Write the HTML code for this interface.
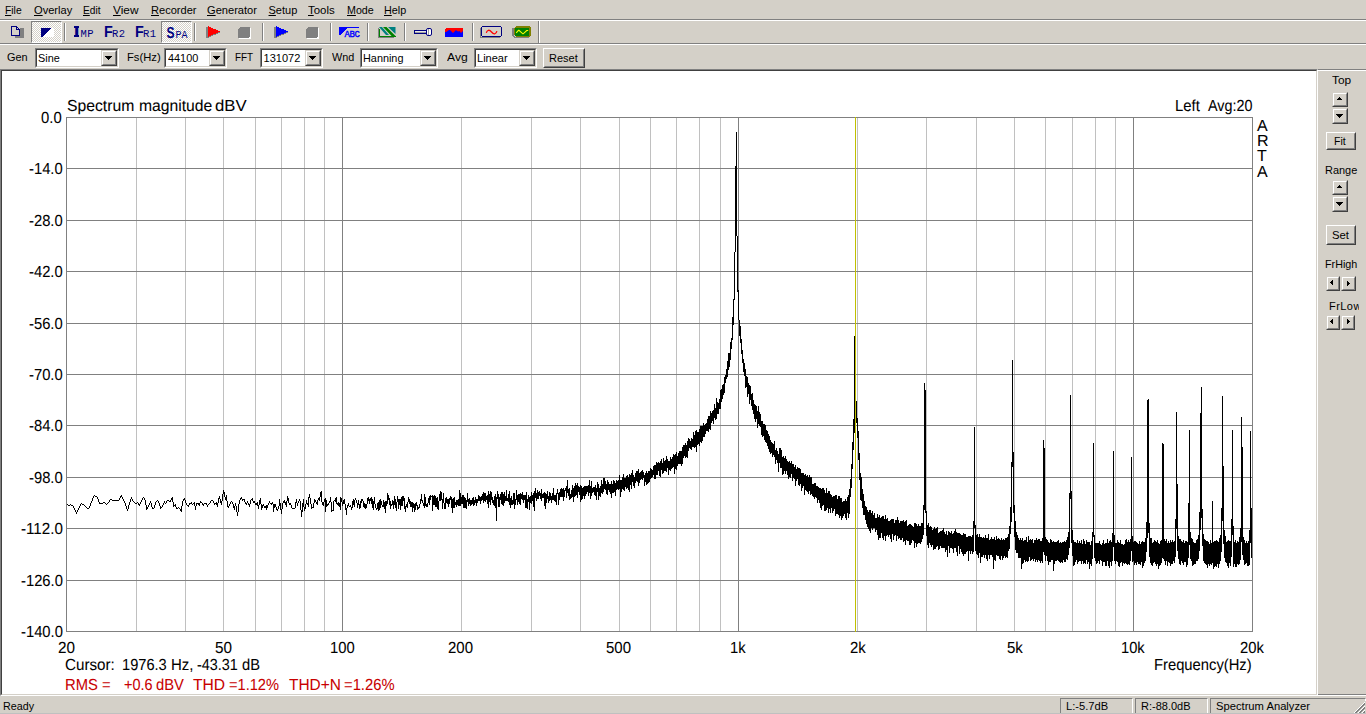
<!DOCTYPE html><html lang="en"><head><meta charset="utf-8"><title>ARTA - Spectrum Analyzer</title><style>
html,body{margin:0;padding:0}
body{width:1366px;height:714px;overflow:hidden;background:#d4d0c8;position:relative;font-family:"Liberation Sans", sans-serif;font-size:11px;color:#000;-webkit-font-smoothing:antialiased}
.abs,.t,.hl,.vl,.btn,.combo,.spin,.pane,.tb{position:absolute}
.t{white-space:pre;line-height:normal;transform-origin:0 0}
.p{text-rendering:geometricPrecision;-webkit-text-stroke:0.06px}
.hl{height:1px;left:0;width:1366px}
.vl{width:1px}
.btn{box-sizing:border-box;border:1px solid;border-color:#ffffff #404040 #404040 #ffffff;background:#d4d0c8}
.btn i{position:absolute;left:0;top:0;right:0;bottom:0;border:1px solid;border-color:#d4d0c8 #808080 #808080 #d4d0c8}
.sbtn{position:absolute;box-sizing:border-box;border:1px solid;border-color:#d4d0c8 #404040 #404040 #d4d0c8;background:#d4d0c8}
.sbtn i{position:absolute;left:0;top:0;right:0;bottom:0;border:1px solid;border-color:#ffffff #808080 #808080 #ffffff}
.combo{box-sizing:border-box;height:20px;top:48px;border:1px solid;border-color:#808080 #ffffff #ffffff #808080;background:#fff}
.combo>i{position:absolute;left:0;top:0;right:0;bottom:0;border:1px solid;border-color:#404040 #d4d0c8 #d4d0c8 #404040}
.combo .dd{right:1px;top:1px;width:16px;height:16px}
.pressed{position:absolute;box-sizing:border-box;width:31px;height:22px;top:21px;border:1px solid;border-color:#808080 #ffffff #ffffff #808080;
 background-image:conic-gradient(#ffffff 25%,#d4d0c8 0 50%,#ffffff 0 75%,#d4d0c8 0);background-size:2px 2px}
.sep{position:absolute;top:23px;width:2px;height:18px;border-left:1px solid #808080;border-right:1px solid #ffffff;box-sizing:border-box}
.pane{box-sizing:border-box;top:698px;height:16px;border:1px solid;border-color:#808080 #ffffff #ffffff #808080}
svg{position:absolute;left:0;top:0;overflow:visible}
u{text-decoration:underline;text-underline-offset:1px;text-decoration-thickness:1px}
</style></head><body>
<div class="abs" id="menubar" style="left:0;top:0;width:1366px;height:19px">
<div id="t1" class="t " style="left:5.37px;top:4px;font-size:11px;transform:scaleX(0.9375);"><u>F</u>ile</div>
<div id="t2" class="t " style="left:34.22px;top:4px;font-size:11px;transform:scaleX(1.009);"><u>O</u>verlay</div>
<div id="t3" class="t " style="left:82.89px;top:4px;font-size:11px;transform:scaleX(0.9225);"><u>E</u>dit</div>
<div id="t4" class="t " style="left:112.94px;top:4px;font-size:11px;transform:scaleX(1.0771);"><u>V</u>iew</div>
<div id="t5" class="t " style="left:150.81px;top:4px;font-size:11px;transform:scaleX(1.0059);"><u>R</u>ecorder</div>
<div id="t6" class="t " style="left:207.1px;top:4px;font-size:11px;transform:scaleX(1.0091);"><u>G</u>enerator</div>
<div id="t7" class="t " style="left:268.53px;top:4px;font-size:11px;"><u>S</u>etup</div>
<div id="t8" class="t " style="left:308.14px;top:4px;font-size:11px;transform:scaleX(1.0381);"><u>T</u>ools</div>
<div id="t9" class="t " style="left:346.5px;top:4px;font-size:11px;transform:scaleX(0.9692);"><u>M</u>ode</div>
<div id="t10" class="t " style="left:383.64px;top:4px;font-size:11px;transform:scaleX(0.9805);"><u>H</u>elp</div>
</div>
<div class="hl" style="top:19px;background:#808080"></div><div class="hl" style="top:20px;background:#ffffff"></div>
<div class="abs" id="toolbar" style="left:0;top:21px;width:540px;height:22px"></div>
<div class="pressed" style="left:31px"></div><div class="pressed" style="left:161px"></div>
<div class="sep" style="left:64px"></div>
<div class="sep" style="left:194px"></div>
<div class="sep" style="left:262px"></div>
<div class="sep" style="left:330px"></div>
<div class="sep" style="left:367px"></div>
<div class="sep" style="left:404px"></div>
<div class="sep" style="left:472px"></div>
<div class="vl" style="left:538px;top:21px;height:22px;background:#808080"></div><div class="vl" style="left:539px;top:21px;height:22px;background:#ffffff"></div>
<div class="hl" style="top:43px;background:#808080"></div><div class="hl" style="top:44px;background:#ffffff"></div>
<svg width="540" height="46" viewBox="0 0 540 46" shape-rendering="crispEdges"><rect x="15" y="28" width="9" height="10" fill="#808080"/><path d="M11 26h6l3 3v7h-9z" fill="#d4d0c8"/><path d="M11.5 26.5h5l3 3v6h-8z M16.5 26.5v3h3" fill="none" stroke="#000080"/><path d="M41 28h13v9h-13z" fill="#fff"/><path d="M41 28h10l-9 9h-1z" fill="#000080"/><text transform="translate(73.7 37) scale(1.3 1)" font-family='"Liberation Sans", sans-serif' font-weight="bold" font-size="16" fill="#000080" shape-rendering="auto" text-rendering="geometricPrecision">I</text><path d="M74 26h5v2h-5zM74 35h5v2h-5z" fill="#000080"/><text x="80.5" y="37" font-family='"Liberation Mono", monospace' font-weight="normal" font-size="10.5" letter-spacing="0.5" fill="#000080"  shape-rendering="auto">MP</text><text transform="translate(104.1 37) scale(0.9 1)" font-family='"Liberation Sans", sans-serif' font-weight="bold" font-size="16" fill="#000080" shape-rendering="auto" text-rendering="geometricPrecision">F</text><text x="111.9" y="37" font-family='"Liberation Mono", monospace' font-weight="normal" font-size="10.5" letter-spacing="0.5" fill="#000080"  shape-rendering="auto">R2</text><text transform="translate(135.1 37) scale(0.9 1)" font-family='"Liberation Sans", sans-serif' font-weight="bold" font-size="16" fill="#000080" shape-rendering="auto" text-rendering="geometricPrecision">F</text><text x="142.9" y="37" font-family='"Liberation Mono", monospace' font-weight="normal" font-size="10.5" letter-spacing="0.5" fill="#000080"  shape-rendering="auto">R1</text><text transform="translate(166.5 38) scale(0.76 1)" font-family='"Liberation Sans", sans-serif' font-weight="bold" font-size="15.8" fill="#000080" shape-rendering="auto" text-rendering="geometricPrecision">S</text><text x="175.6" y="38" font-family='"Liberation Mono", monospace' font-weight="normal" font-size="10" letter-spacing="0.0" fill="#000080"  shape-rendering="auto">PA</text><path d="M206 27h2v11h-2z M208 27l12 5.500l-12 5.500z" fill="#808080"/><path d="M208 26l12 5.500l-12 5.500z" fill="#ff0000"/><path d="M274 27h2v11h-2z M276 27l12 5.500l-12 5.500z" fill="#808080"/><path d="M276 26l12 5.500l-12 5.500z" fill="#0000ff"/><path d="M239 28h12v10l-1 1h-11z" fill="#fff"/><path d="M240 27h10v10l-2 1h-10v-9z" fill="#808080"/><path d="M307 28h12v10l-1 1h-11z" fill="#fff"/><path d="M308 27h10v10l-2 1h-10v-9z" fill="#808080"/><path d="M339 27h20v1h-12l-7 7h-1z" fill="#0000ff"/><text x="344.5" y="37" font-family='"Liberation Mono", monospace' font-weight="normal" font-size="9.0" letter-spacing="-0.45" fill="#0000ff" stroke="#0000ff" stroke-width="0.35" shape-rendering="auto">ABC</text><path d="M378 28h1v9h15v1h-16z" fill="#808080"/><path d="M379 27h3l7 8h-3z M388 27h7.500v7z" fill="#008080" shape-rendering="auto"/><path d="M379 29h1v7h15.500v1h-16.500z" fill="#008000"/><path d="M383 27h3.500l9.500 9.500v0.500h-3.500z" fill="#008000" shape-rendering="auto"/><rect x="414.5" y="30.5" width="12" height="3" fill="#e8e8e8" stroke="#000080"/><path d="M415 32h11" stroke="#a0a0a0"/><rect x="426.5" y="28.5" width="5" height="7" rx="1.5" fill="#fff" stroke="#000080" shape-rendering="auto"/><path d="M428.5 29v6" stroke="#a0a0a0"/><path d="M427 28h1M431 28h1M427 36h1" stroke="#d4d0c8" stroke-width="0"/><path d="M446 28h16l1 1v8h-18v-8z" fill="#ff0000"/><path d="M445 37v-5l1 0l3-2l1 0l3 3l3-3l1 1l1.500 0.500l1-0.500l1.500 2l2-2v6z" fill="#0000ff" shape-rendering="auto"/><path d="M480 28h1v9h19v1h-20z" fill="#808080"/><path d="M482 26.500h19M482 36.500h19M481.500 27v9M501.500 27v9" fill="none" stroke="#000080"/><path d="M486.300 32.800c0.800-3 3-3.400 5.200-0.800s4.600 2.400 5.400-0.800" fill="none" stroke="#ff0000" stroke-width="1.300" shape-rendering="auto"/><path d="M512 28h2v8l2 1h13v1h-15l-2-2z" fill="#808080"/><path d="M516 26h13l2 2v7l-2 2h-13l-2-2v-7z" fill="#808000"/><rect x="515" y="28" width="14" height="8" fill="#008000"/><path d="M516.200 32.800l2.300-2.500l0.500 0l3.800 3.500l0.400 0l3.500-3.300l1.500 0" fill="none" stroke="#ffff00" stroke-width="1.100" shape-rendering="auto"/></svg>
<div id="t11" class="t " style="left:7.49px;top:51px;font-size:11px;transform:scaleX(0.9935);">Gen</div>
<div class="combo" style="left:35px;width:84px"><i></i><div class="sbtn dd"><i></i><svg width="7" height="4" style="left:3px;top:5px" shape-rendering="crispEdges"><path d="M0 0h7v1h-1v1h-1v1h-1v1h-1v-1h-1v-1h-1v-1h-1z" fill="#000"/></svg></div></div>
<div id="t12" class="t " style="left:38.19px;top:52px;font-size:11px;transform:scaleX(0.9883);">Sine</div>
<div id="t13" class="t " style="left:127.11px;top:51px;font-size:11px;transform:scaleX(1.019);">Fs(Hz)</div>
<div class="combo" style="left:164px;width:63px"><i></i><div class="sbtn dd"><i></i><svg width="7" height="4" style="left:3px;top:5px" shape-rendering="crispEdges"><path d="M0 0h7v1h-1v1h-1v1h-1v1h-1v-1h-1v-1h-1v-1h-1z" fill="#000"/></svg></div></div>
<div id="t14" class="t " style="left:168.26px;top:52px;font-size:11px;transform:scaleX(0.9902);">44100</div>
<div id="t15" class="t " style="left:235.22px;top:51px;font-size:11px;transform:scaleX(0.8964);">FFT</div>
<div class="combo" style="left:260px;width:63px"><i></i><div class="sbtn dd"><i></i><svg width="7" height="4" style="left:3px;top:5px" shape-rendering="crispEdges"><path d="M0 0h7v1h-1v1h-1v1h-1v1h-1v-1h-1v-1h-1v-1h-1z" fill="#000"/></svg></div></div>
<div id="t16" class="t " style="left:263.6px;top:52px;font-size:11px;">131072</div>
<div id="t17" class="t " style="left:331.76px;top:51px;font-size:11px;transform:scaleX(0.9861);">Wnd</div>
<div class="combo" style="left:360px;width:78px"><i></i><div class="sbtn dd"><i></i><svg width="7" height="4" style="left:3px;top:5px" shape-rendering="crispEdges"><path d="M0 0h7v1h-1v1h-1v1h-1v1h-1v-1h-1v-1h-1v-1h-1z" fill="#000"/></svg></div></div>
<div id="t18" class="t " style="left:362.56px;top:52px;font-size:11px;transform:scaleX(0.9872);">Hanning</div>
<div id="t19" class="t " style="left:446.53px;top:51px;font-size:11px;transform:scaleX(1.1046);">Avg</div>
<div class="combo" style="left:474px;width:63px"><i></i><div class="sbtn dd"><i></i><svg width="7" height="4" style="left:3px;top:5px" shape-rendering="crispEdges"><path d="M0 0h7v1h-1v1h-1v1h-1v1h-1v-1h-1v-1h-1v-1h-1z" fill="#000"/></svg></div></div>
<div id="t20" class="t " style="left:476.9px;top:52px;font-size:11px;transform:scaleX(1.0033);">Linear</div>
<div class="btn" style="left:543px;top:48px;width:42px;height:20px"><i></i></div>
<div id="t21" class="t " style="left:549.15px;top:52px;font-size:11px;transform:scaleX(0.9979);">Reset</div>
<div class="abs" id="view" style="box-sizing:border-box;left:0;top:69px;width:1318px;height:627px;border:1px solid;border-color:#808080 #ffffff #ffffff #808080;background:#fff"><i style="position:absolute;left:0;top:0;right:0;bottom:0;border:1px solid;border-color:#404040 #d4d0c8 #d4d0c8 #404040"></i></div>
<svg id="plot" width="1366" height="714" viewBox="0 0 1366 714" shape-rendering="crispEdges"><path d="M136.5 117V632M185.5 117V632M223.5 117V632M255.5 117V632M281.5 117V632M304.5 117V632M324.5 117V632M461.5 117V632M531.5 117V632M580.5 117V632M619.5 117V632M650.5 117V632M676.5 117V632M699.5 117V632M720.5 117V632M857.5 117V632M926.5 117V632M976.5 117V632M1014.5 117V632M1045.5 117V632M1072.5 117V632M1095.5 117V632M1115.5 117V632" stroke="#c0c0c0" fill="none"/><path d="M342.5 117V632M738.5 117V632M1133.5 117V632" stroke="#808080" fill="none"/><path d="M66 117.5H1253M66 168.5H1253M66 220.5H1253M66 271.5H1253M66 323.5H1253M66 374.5H1253M66 425.5H1253M66 477.5H1253M66 528.5H1253M66 580.5H1253M66 631.5H1253M66.5 117V632M1252.5 117V632" stroke="#808080" fill="none"/><path d="M67.5 504v1M68.5 505v1M69.5 505v1M70.5 504v1M71.5 505v1M72.5 505v1M73.5 506v2M74.5 508v2M75.5 510v2M76.5 512v2M77.5 510v2M78.5 508v2M79.5 506v2M80.5 504v2M81.5 503v1M82.5 504v1M83.5 504v1M84.5 505v1M85.5 506v1M86.5 507v1M87.5 508v1M88.5 508v1M89.5 506v2M90.5 503v3M91.5 501v2M92.5 498v3M93.5 496v2M94.5 495v1M95.5 496v1M96.5 496v1M97.5 497v2M98.5 499v3M99.5 502v2M100.5 503v1M101.5 503v1M102.5 503v1M103.5 502v1M104.5 502v1M105.5 503v1M106.5 504v1M107.5 503v1M108.5 502v1M109.5 500v2M110.5 499v1M111.5 499v1M112.5 500v1M113.5 500v1M114.5 500v1M115.5 500v1M116.5 500v1M117.5 500v1M118.5 500v1M119.5 498v2M120.5 496v2M121.5 495v2M122.5 497v2M123.5 499v2M124.5 501v2M125.5 503v3M126.5 506v3M127.5 509v2M128.5 505v4M129.5 502v3M130.5 499v3M131.5 497v2M132.5 499v2M133.5 501v1M134.5 502v1M135.5 503v1M136.5 503v1M137.5 502v1M138.5 503v2M139.5 504v2M140.5 502v2M141.5 500v2M142.5 498v2M143.5 497v1M144.5 498v2M145.5 500v5M146.5 505v5M147.5 507v2M148.5 505v2M149.5 503v2M150.5 501v2M151.5 503v4M152.5 507v2M153.5 508v1M154.5 505v3M155.5 502v3M156.5 501v1M157.5 500v1M158.5 501v2M159.5 503v3M160.5 506v3M161.5 507v1M162.5 505v2M163.5 503v2M164.5 501v2M165.5 503v1M166.5 501v2M167.5 500v1M168.5 500v1M169.5 501v1M170.5 500v2M171.5 498v2M172.5 497v5M173.5 502v5M174.5 505v1M175.5 504v3M176.5 507v2M177.5 508v1M178.5 507v1M179.5 508v1M180.5 509v2M181.5 506v6M182.5 501v5M183.5 499v2M184.5 498v2M185.5 500v3M186.5 503v2M187.5 505v1M188.5 505v2M189.5 503v2M190.5 503v1M191.5 502v2M192.5 504v1M193.5 503v1M194.5 502v4M195.5 506v4M196.5 503v3M197.5 503v1M198.5 503v2M199.5 503v3M200.5 501v2M201.5 502v1M202.5 503v2M203.5 504v2M204.5 503v1M205.5 503v1M206.5 503v2M207.5 505v2M208.5 504v1M209.5 503v1M210.5 501v2M211.5 500v1M212.5 500v1M213.5 501v2M214.5 503v2M215.5 503v1M216.5 502v3M217.5 503v4M218.5 498v5M219.5 496v3M220.5 499v4M221.5 501v4M222.5 494v7M223.5 490v4M224.5 492v5M225.5 497v3M226.5 495v6M227.5 501v6M228.5 506v2M229.5 504v2M230.5 502v2M231.5 501v1M232.5 502v2M233.5 504v4M234.5 506v4M235.5 503v3M236.5 506v6M237.5 512v4M238.5 504v8M239.5 500v4M240.5 498v2M241.5 497v2M242.5 499v2M243.5 499v1M244.5 499v3M245.5 502v2M246.5 503v2M247.5 501v2M248.5 503v2M249.5 504v3M250.5 500v4M251.5 499v1M252.5 498v3M253.5 501v2M254.5 501v2M255.5 503v2M256.5 503v2M257.5 502v4M258.5 505v4M259.5 500v5M260.5 498v6M261.5 504v6M262.5 505v3M263.5 504v2M264.5 506v2M265.5 506v2M266.5 505v5M267.5 505v3M268.5 503v2M269.5 501v2M270.5 503v1M271.5 503v2M272.5 502v2M273.5 504v8M274.5 504v4M275.5 504v3M276.5 507v3M277.5 509v2M278.5 506v3M279.5 499v7M280.5 503v7M281.5 509v5M282.5 503v6M283.5 501v2M284.5 500v3M285.5 502v3M286.5 501v6M287.5 496v5M288.5 498v5M289.5 503v2M290.5 503v2M291.5 505v3M292.5 508v1M293.5 508v1M294.5 508v1M295.5 502v6M296.5 499v4M297.5 503v3M298.5 501v2M299.5 499v2M300.5 501v9M301.5 510v7M302.5 503v9M303.5 499v8M304.5 507v4M305.5 504v5M306.5 500v4M307.5 503v2M308.5 497v10M309.5 494v4M310.5 498v6M311.5 504v5M312.5 507v1M313.5 503v5M314.5 499v4M315.5 500v2M316.5 502v2M317.5 500v5M318.5 498v2M319.5 497v4M320.5 492v5M321.5 491v11M322.5 502v3M323.5 502v4M324.5 499v3M325.5 498v14M326.5 500v7M327.5 504v2M328.5 503v2M329.5 501v2M330.5 497v5M331.5 502v10M332.5 510v1M333.5 501v10M334.5 500v1M335.5 498v4M336.5 497v7M337.5 503v2M338.5 502v4M339.5 503v4M340.5 497v13M341.5 498v4M342.5 502v4M343.5 500v4M344.5 499v5M345.5 504v6M346.5 508v7M347.5 505v3M348.5 503v3M349.5 506v1M350.5 505v2M351.5 507v3M352.5 501v7M353.5 499v6M354.5 500v7M355.5 498v2M356.5 500v3M357.5 503v5M358.5 500v5M359.5 504v5M360.5 501v7M361.5 499v4M362.5 499v2M363.5 501v6M364.5 503v5M365.5 504v5M366.5 504v4M367.5 498v6M368.5 497v4M369.5 499v5M370.5 498v3M371.5 497v7M372.5 499v9M373.5 501v9M374.5 497v7M375.5 504v4M376.5 508v2M377.5 503v6M378.5 502v9M379.5 500v10M380.5 499v9M381.5 501v4M382.5 505v2M383.5 500v7M384.5 502v7M385.5 501v12M386.5 501v5M387.5 493v11M388.5 495v5M389.5 498v7M390.5 501v8M391.5 504v2M392.5 500v5M393.5 501v8M394.5 496v9M395.5 499v9M396.5 502v9M397.5 496v6M398.5 499v10M399.5 499v6M400.5 499v11M401.5 497v9M402.5 496v10M403.5 496v5M404.5 498v11M405.5 506v6M406.5 504v3M407.5 502v6M408.5 497v5M409.5 499v5M410.5 501v6M411.5 502v5M412.5 502v10M413.5 503v5M414.5 504v8M415.5 503v7M416.5 502v4M417.5 505v5M418.5 507v2M419.5 504v4M420.5 499v5M421.5 494v7M422.5 500v3M423.5 503v3M424.5 494v14M425.5 497v9M426.5 504v3M427.5 503v4M428.5 498v5M429.5 496v9M430.5 495v5M431.5 496v1M432.5 495v16M433.5 496v9M434.5 495v10M435.5 496v11M436.5 498v9M437.5 497v12M438.5 501v9M439.5 494v7M440.5 491v10M441.5 492v8M442.5 499v10M443.5 493v10M444.5 503v6M445.5 498v11M446.5 497v6M447.5 499v5M448.5 499v8M449.5 498v6M450.5 496v4M451.5 497v11M452.5 499v14M453.5 498v10M454.5 497v11M455.5 502v3M456.5 500v7M457.5 500v5M458.5 499v7M459.5 490v16M460.5 493v13M461.5 497v7M462.5 495v9M463.5 495v13M464.5 497v11M465.5 498v10M466.5 500v9M467.5 493v9M468.5 499v7M469.5 498v6M470.5 500v6M471.5 500v5M472.5 498v6M473.5 497v9M474.5 500v5M475.5 497v6M476.5 499v7M477.5 499v4M478.5 495v6M479.5 496v5M480.5 497v7M481.5 496v5M482.5 494v6M483.5 492v11M484.5 493v8M485.5 493v9M486.5 496v4M487.5 495v9M488.5 491v17M489.5 494v8M490.5 491v14M491.5 492v8M492.5 497v6M493.5 500v5M494.5 496v10M495.5 494v14M496.5 497v24M497.5 491v8M498.5 494v13M499.5 497v10M500.5 494v6M501.5 492v12M502.5 492v13M503.5 494v12M504.5 492v11M505.5 496v5M506.5 490v11M507.5 498v3M508.5 494v8M509.5 491v14M510.5 498v10M511.5 496v9M512.5 500v5M513.5 493v11M514.5 493v16M515.5 499v6M516.5 490v10M517.5 495v10M518.5 494v8M519.5 494v10M520.5 493v12M521.5 494v5M522.5 492v8M523.5 495v8M524.5 495v5M525.5 495v13M526.5 492v16M527.5 499v10M528.5 495v7M529.5 497v13M530.5 496v7M531.5 492v12M532.5 495v6M533.5 493v14M534.5 491v20M535.5 488v10M536.5 493v8M537.5 490v9M538.5 492v7M539.5 491v5M540.5 493v6M541.5 489v12M542.5 494v4M543.5 493v5M544.5 492v14M545.5 493v16M546.5 494v9M547.5 491v8M548.5 496v7M549.5 492v9M550.5 493v7M551.5 496v7M552.5 493v7M553.5 488v12M554.5 495v6M555.5 495v7M556.5 493v12M557.5 489v5M558.5 493v12M559.5 492v8M560.5 489v8M561.5 488v9M562.5 489v8M563.5 488v13M564.5 490v7M565.5 488v3M566.5 486v12M567.5 480v13M568.5 489v7M569.5 488v12M570.5 494v5M571.5 490v8M572.5 485v12M573.5 488v14M574.5 486v11M575.5 483v13M576.5 485v10M577.5 483v15M578.5 486v6M579.5 487v8M580.5 485v17M581.5 486v14M582.5 488v11M583.5 487v9M584.5 486v13M585.5 486v10M586.5 486v8M587.5 486v6M588.5 485v11M589.5 480v13M590.5 486v13M591.5 481v15M592.5 488v5M593.5 487v5M594.5 487v8M595.5 485v11M596.5 488v12M597.5 482v10M598.5 484v16M599.5 488v8M600.5 486v11M601.5 480v13M602.5 484v10M603.5 478v14M604.5 478v11M605.5 481v9M606.5 484v10M607.5 480v15M608.5 482v8M609.5 484v8M610.5 484v10M611.5 481v17M612.5 484v9M613.5 480v13M614.5 481v11M615.5 483v13M616.5 480v10M617.5 481v8M618.5 480v10M619.5 475v14M620.5 480v17M621.5 480v12M622.5 477v12M623.5 474v16M624.5 478v13M625.5 478v9M626.5 476v13M627.5 475v13M628.5 477v13M629.5 474v18M630.5 475v10M631.5 473v16M632.5 470v12M633.5 475v11M634.5 477v11M635.5 473v10M636.5 471v10M637.5 471v11M638.5 469v17M639.5 473v10M640.5 472v8M641.5 471v8M642.5 470v10M643.5 472v6M644.5 475v11M645.5 473v9M646.5 471v14M647.5 473v11M648.5 471v12M649.5 471v11M650.5 468v11M651.5 469v9M652.5 470v7M653.5 466v9M654.5 465v14M655.5 465v14M656.5 462v13M657.5 463v12M658.5 462v9M659.5 463v13M660.5 461v16M661.5 459v11M662.5 463v11M663.5 458v15M664.5 461v10M665.5 460v11M666.5 456v16M667.5 459v9M668.5 461v14M669.5 461v9M670.5 457v14M671.5 459v10M672.5 457v11M673.5 454v13M674.5 455v19M675.5 454v15M676.5 452v18M677.5 456v10M678.5 453v11M679.5 451v13M680.5 451v13M681.5 451v15M682.5 447v17M683.5 445v13M684.5 445v11M685.5 443v15M686.5 445v12M687.5 441v17M688.5 438v13M689.5 439v9M690.5 441v8M691.5 438v12M692.5 439v8M693.5 432v15M694.5 435v13M695.5 431v16M696.5 430v22M697.5 432v13M698.5 432v12M699.5 429v17M700.5 426v16M701.5 426v17M702.5 426v15M703.5 423v14M704.5 425v12M705.5 424v10M706.5 423v8M707.5 419v12M708.5 416v16M709.5 416v13M710.5 411v19M711.5 413v10M712.5 411v10M713.5 410v14M714.5 404v14M715.5 408v12M716.5 398v21M717.5 402v12M718.5 403v11M719.5 399v10M720.5 390v19M721.5 389v13M722.5 385v14M723.5 384v11M724.5 377v16M725.5 375v8M726.5 369v10M727.5 361v16M728.5 353v17M729.5 353v14M730.5 342v18M731.5 338v11M732.5 317v23M733.5 299v26M734.5 252v48M735.5 166v86M736.5 132v104M737.5 236v56M738.5 290v30M739.5 320v16M740.5 326v17M741.5 339v15M742.5 350v13M743.5 359v13M744.5 363v13M745.5 369v19M746.5 376v11M747.5 377v20M748.5 383v11M749.5 385v19M750.5 386v14M751.5 394v12M752.5 393v17M753.5 400v14M754.5 404v15M755.5 405v17M756.5 406v13M757.5 411v17M758.5 406v18M759.5 412v14M760.5 414v13M761.5 421v14M762.5 421v16M763.5 424v12M764.5 424v16M765.5 425v17M766.5 430v13M767.5 431v15M768.5 434v15M769.5 436v16M770.5 440v14M771.5 442v11M772.5 443v14M773.5 444v11M774.5 441v16M775.5 450v14M776.5 448v12M777.5 451v12M778.5 454v18M779.5 448v15M780.5 448v20M781.5 450v18M782.5 457v18M783.5 456v18M784.5 458v13M785.5 456v18M786.5 459v12M787.5 461v14M788.5 462v17M789.5 461v16M790.5 463v15M791.5 461v13M792.5 464v17M793.5 464v14M794.5 467v12M795.5 465v21M796.5 469v12M797.5 467v12M798.5 468v17M799.5 468v18M800.5 469v15M801.5 473v18M802.5 473v15M803.5 473v13M804.5 475v20M805.5 474v16M806.5 476v15M807.5 475v17M808.5 477v17M809.5 475v16M810.5 477v18M811.5 477v17M812.5 484v12M813.5 484v13M814.5 483v16M815.5 483v14M816.5 486v12M817.5 486v17M818.5 487v13M819.5 488v15M820.5 488v20M821.5 489v21M822.5 488v18M823.5 488v17M824.5 490v21M825.5 493v18M826.5 488v22M827.5 493v15M828.5 491v22M829.5 491v18M830.5 494v19M831.5 495v13M832.5 497v16M833.5 496v15M834.5 496v13M835.5 495v21M836.5 495v19M837.5 499v15M838.5 496v19M839.5 496v22M840.5 498v18M841.5 498v22M842.5 502v16M843.5 501v15M844.5 501v13M845.5 499v19M846.5 501v19M847.5 497v16M848.5 495v23M849.5 489v25M850.5 479v18M851.5 464v24M852.5 442v27M853.5 419v31M854.5 336v97M855.5 277v128M856.5 401v22M857.5 418v20M858.5 431v29M859.5 453v27M860.5 473v27M861.5 477v24M862.5 489v19M863.5 494v21M864.5 501v14M865.5 506v14M866.5 507v17M867.5 510v17M868.5 512v17M869.5 510v21M870.5 510v23M871.5 513v15M872.5 511v19M873.5 515v13M874.5 513v15M875.5 518v14M876.5 518v12M877.5 514v21M878.5 517v23M879.5 515v23M880.5 518v20M881.5 517v16M882.5 516v22M883.5 516v24M884.5 519v17M885.5 515v26M886.5 519v17M887.5 518v17M888.5 521v16M889.5 521v14M890.5 520v19M891.5 519v23M892.5 519v15M893.5 519v21M894.5 523v13M895.5 520v15M896.5 520v21M897.5 517v19M898.5 520v19M899.5 523v15M900.5 521v19M901.5 521v19M902.5 521v17M903.5 520v22M904.5 522v19M905.5 521v24M906.5 520v20M907.5 526v15M908.5 525v16M909.5 524v21M910.5 524v21M911.5 525v18M912.5 526v14M913.5 527v14M914.5 523v25M915.5 523v20M916.5 524v23M917.5 526v18M918.5 524v19M919.5 526v17M920.5 526v18M921.5 523v19M922.5 523v16M923.5 505v30M924.5 383v127M925.5 390v123M926.5 511v25M927.5 525v20M928.5 523v25M929.5 527v16M930.5 526v19M931.5 527v20M932.5 530v15M933.5 529v21M934.5 527v22M935.5 529v20M936.5 528v19M937.5 527v19M938.5 533v17M939.5 532v17M940.5 531v15M941.5 531v17M942.5 530v18M943.5 528v20M944.5 532v16M945.5 534v18M946.5 531v19M947.5 535v22M948.5 531v15M949.5 532v21M950.5 533v15M951.5 531v17M952.5 534v15M953.5 533v20M954.5 531v17M955.5 529v19M956.5 532v20M957.5 533v23M958.5 533v13M959.5 533v21M960.5 534v15M961.5 535v17M962.5 535v19M963.5 533v23M964.5 534v20M965.5 534v20M966.5 537v15M967.5 537v14M968.5 536v25M969.5 536v15M970.5 536v18M971.5 537v14M972.5 535v19M973.5 521v31M974.5 427v101M975.5 525v26M976.5 535v19M977.5 534v21M978.5 537v21M979.5 534v19M980.5 537v26M981.5 537v20M982.5 538v19M983.5 537v18M984.5 538v20M985.5 535v20M986.5 538v21M987.5 538v23M988.5 534v21M989.5 540v19M990.5 539v16M991.5 537v18M992.5 539v18M993.5 539v30M994.5 537v23M995.5 540v21M996.5 536v19M997.5 539v17M998.5 538v18M999.5 539v20M1000.5 540v20M1001.5 538v18M1002.5 540v20M1003.5 539v19M1004.5 540v16M1005.5 538v20M1006.5 538v19M1007.5 537v21M1008.5 534v17M1009.5 526v23M1010.5 507v27M1011.5 462v60M1012.5 360v107M1013.5 452v61M1014.5 505v32M1015.5 521v29M1016.5 532v21M1017.5 535v18M1018.5 538v20M1019.5 540v18M1020.5 538v20M1021.5 540v29M1022.5 538v26M1023.5 541v22M1024.5 540v20M1025.5 540v22M1026.5 537v24M1027.5 542v20M1028.5 536v25M1029.5 540v17M1030.5 539v22M1031.5 540v20M1032.5 539v20M1033.5 543v18M1034.5 540v19M1035.5 540v22M1036.5 538v22M1037.5 540v22M1038.5 539v21M1039.5 539v22M1040.5 541v22M1041.5 541v20M1042.5 538v25M1043.5 440v112M1044.5 448v107M1045.5 537v24M1046.5 539v17M1047.5 540v21M1048.5 542v23M1049.5 543v19M1050.5 539v23M1051.5 540v20M1052.5 542v18M1053.5 541v30M1054.5 542v22M1055.5 542v19M1056.5 542v19M1057.5 541v19M1058.5 540v21M1059.5 543v19M1060.5 542v21M1061.5 543v19M1062.5 542v21M1063.5 542v18M1064.5 541v21M1065.5 542v20M1066.5 540v19M1067.5 537v23M1068.5 532v23M1069.5 493v55M1070.5 395v104M1071.5 491v52M1072.5 530v26M1073.5 540v26M1074.5 542v23M1075.5 542v20M1076.5 543v17M1077.5 540v24M1078.5 543v19M1079.5 541v20M1080.5 543v18M1081.5 540v24M1082.5 544v17M1083.5 539v25M1084.5 541v22M1085.5 544v20M1086.5 540v20M1087.5 542v22M1088.5 542v20M1089.5 542v27M1090.5 545v19M1091.5 541v25M1092.5 532v27M1093.5 443v94M1094.5 535v23M1095.5 543v18M1096.5 543v21M1097.5 543v20M1098.5 543v18M1099.5 541v23M1100.5 544v16M1101.5 545v16M1102.5 543v23M1103.5 540v22M1104.5 544v18M1105.5 543v23M1106.5 543v23M1107.5 539v22M1108.5 543v23M1109.5 541v27M1110.5 540v22M1111.5 542v24M1112.5 533v28M1113.5 451v96M1114.5 535v26M1115.5 543v21M1116.5 543v18M1117.5 540v22M1118.5 542v24M1119.5 543v24M1120.5 540v23M1121.5 544v18M1122.5 544v22M1123.5 545v18M1124.5 544v20M1125.5 540v23M1126.5 539v25M1127.5 542v23M1128.5 540v24M1129.5 542v23M1130.5 539v22M1131.5 457v94M1132.5 536v26M1133.5 542v19M1134.5 541v24M1135.5 541v22M1136.5 542v23M1137.5 543v19M1138.5 544v20M1139.5 541v23M1140.5 544v21M1141.5 542v20M1142.5 541v27M1143.5 542v24M1144.5 542v21M1145.5 538v23M1146.5 522v30M1147.5 400v138M1148.5 399v134M1149.5 523v34M1150.5 538v25M1151.5 538v27M1152.5 543v23M1153.5 542v21M1154.5 540v22M1155.5 541v23M1156.5 542v24M1157.5 540v24M1158.5 543v26M1159.5 544v22M1160.5 541v24M1161.5 540v23M1162.5 443v115M1163.5 444v115M1164.5 539v22M1165.5 541v24M1166.5 539v22M1167.5 543v23M1168.5 541v21M1169.5 543v20M1170.5 540v26M1171.5 542v22M1172.5 540v24M1173.5 542v19M1174.5 541v22M1175.5 519v38M1176.5 412v117M1177.5 484v67M1178.5 536v23M1179.5 539v25M1180.5 539v26M1181.5 541v20M1182.5 542v21M1183.5 540v25M1184.5 543v19M1185.5 541v21M1186.5 541v26M1187.5 542v23M1188.5 503v55M1189.5 430v115M1190.5 532v27M1191.5 538v23M1192.5 539v27M1193.5 542v23M1194.5 543v21M1195.5 543v21M1196.5 540v21M1197.5 539v22M1198.5 535v24M1199.5 512v39M1200.5 413v117M1201.5 387v131M1202.5 509v37M1203.5 534v27M1204.5 539v24M1205.5 540v24M1206.5 541v24M1207.5 541v27M1208.5 542v22M1209.5 544v22M1210.5 540v24M1211.5 543v22M1212.5 501v62M1213.5 542v27M1214.5 541v26M1215.5 541v25M1216.5 540v27M1217.5 541v23M1218.5 542v26M1219.5 538v26M1220.5 535v26M1221.5 508v44M1222.5 396v125M1223.5 466v78M1224.5 530v28M1225.5 536v26M1226.5 542v21M1227.5 541v25M1228.5 540v28M1229.5 541v22M1230.5 541v25M1231.5 519v38M1232.5 430v105M1233.5 526v41M1234.5 542v22M1235.5 540v27M1236.5 543v24M1237.5 541v23M1238.5 542v23M1239.5 537v27M1240.5 528v32M1241.5 417v125M1242.5 447v108M1243.5 537v23M1244.5 540v25M1245.5 543v21M1246.5 541v22M1247.5 543v23M1248.5 541v25M1249.5 530v35M1250.5 431v112M1251.5 508v50" stroke="#000" fill="none"/><path d="M855.5 117V632" stroke="#c0c000" fill="none"/></svg>
<div id="t22" class="t p" style="left:67.39px;top:98px;font-size:16px;transform:scaleX(0.9823);">Spectrum</div>
<div id="t23" class="t p" style="left:138.91px;top:98px;font-size:16px;transform:scaleX(0.9801);">magnitude</div>
<div id="t24" class="t p" style="left:215.3px;top:98px;font-size:16px;transform:scaleX(1.0425);">dBV</div>
<div id="t25" class="t p" style="left:1175.12px;top:98px;font-size:16px;transform:scaleX(0.9284);">Left</div>
<div id="t26" class="t p" style="left:1207.58px;top:98px;font-size:16px;transform:scaleX(0.8966);">Avg:20</div>
<div id="t27" class="t p" style="left:1257px;top:118px;font-size:16px;">A</div>
<div id="t28" class="t p" style="left:1257px;top:133px;font-size:16px;">R</div>
<div id="t29" class="t p" style="left:1257px;top:148px;font-size:16px;">T</div>
<div id="t30" class="t p" style="left:1257px;top:164px;font-size:16px;">A</div>
<div id="t31" class="t yl p" style="left:41.37px;top:110px;font-size:16px;transform:scaleX(0.9284);">0.0</div>
<div id="t32" class="t yl p" style="left:29.03px;top:161px;font-size:16px;transform:scaleX(0.9227);">-14.0</div>
<div id="t33" class="t yl p" style="left:29.03px;top:213px;font-size:16px;transform:scaleX(0.9227);">-28.0</div>
<div id="t34" class="t yl p" style="left:29.03px;top:264px;font-size:16px;transform:scaleX(0.9227);">-42.0</div>
<div id="t35" class="t yl p" style="left:29.03px;top:316px;font-size:16px;transform:scaleX(0.9227);">-56.0</div>
<div id="t36" class="t yl p" style="left:29.03px;top:367px;font-size:16px;transform:scaleX(0.9227);">-70.0</div>
<div id="t37" class="t yl p" style="left:29.03px;top:418px;font-size:16px;transform:scaleX(0.9227);">-84.0</div>
<div id="t38" class="t yl p" style="left:29.03px;top:470px;font-size:16px;transform:scaleX(0.9227);">-98.0</div>
<div id="t39" class="t yl p" style="left:20.8px;top:521px;font-size:16px;transform:scaleX(0.9474);">-112.0</div>
<div id="t40" class="t yl p" style="left:20.79px;top:573px;font-size:16px;transform:scaleX(0.9226);">-126.0</div>
<div id="t41" class="t yl p" style="left:20.79px;top:624px;font-size:16px;transform:scaleX(0.9226);">-140.0</div>
<div id="t42" class="t xl p" style="left:58.09px;top:640px;font-size:16px;transform:scaleX(0.9542);">20</div>
<div id="t43" class="t xl p" style="left:215.09px;top:640px;font-size:16px;transform:scaleX(0.9542);">50</div>
<div id="t44" class="t xl p" style="left:330.09px;top:640px;font-size:16px;transform:scaleX(0.9243);">100</div>
<div id="t45" class="t xl p" style="left:448.19px;top:640px;font-size:16px;transform:scaleX(0.936);">200</div>
<div id="t46" class="t xl p" style="left:606.19px;top:640px;font-size:16px;transform:scaleX(0.936);">500</div>
<div id="t47" class="t xl p" style="left:729.74px;top:640px;font-size:16px;transform:scaleX(0.9206);">1k</div>
<div id="t48" class="t xl p" style="left:849.58px;top:640px;font-size:16px;transform:scaleX(0.9327);">2k</div>
<div id="t49" class="t xl p" style="left:1006.5px;top:640px;font-size:16px;transform:scaleX(0.939);">5k</div>
<div id="t50" class="t xl p" style="left:1120.78px;top:640px;font-size:16px;transform:scaleX(0.9162);">10k</div>
<div id="t51" class="t xl p" style="left:1240.43px;top:640px;font-size:16px;transform:scaleX(0.924);">20k</div>
<div id="t52" class="t p" style="left:65.18px;top:657px;font-size:16px;transform:scaleX(0.948);">Cursor:</div>
<div id="t53" class="t p" style="left:122.25px;top:657px;font-size:16px;transform:scaleX(0.9139);">1976.3</div>
<div id="t54" class="t p" style="left:170.67px;top:657px;font-size:16px;transform:scaleX(0.9357);">Hz,</div>
<div id="t55" class="t p" style="left:196.95px;top:657px;font-size:16px;transform:scaleX(0.8974);">-43.31</div>
<div id="t56" class="t p" style="left:241.71px;top:657px;font-size:16px;transform:scaleX(0.9157);">dB</div>
<div id="t57" class="t p" style="left:65.26px;top:677px;font-size:16px;transform:scaleX(0.9229);color:#c80000;">RMS =</div>
<div id="t58" class="t p" style="left:123.84px;top:677px;font-size:16px;transform:scaleX(0.9033);color:#c80000;">+0.6</div>
<div id="t59" class="t p" style="left:155.51px;top:677px;font-size:16px;transform:scaleX(0.9195);color:#c80000;">dBV</div>
<div id="t60" class="t p" style="left:192.9px;top:677px;font-size:16px;transform:scaleX(0.9757);color:#c80000;">THD</div>
<div id="t61" class="t p" style="left:228.61px;top:677px;font-size:16px;transform:scaleX(0.914);color:#c80000;">=1.12%</div>
<div id="t62" class="t p" style="left:288.75px;top:677px;font-size:16px;transform:scaleX(0.9644);color:#c80000;">THD+N</div>
<div id="t63" class="t p" style="left:343.77px;top:677px;font-size:16px;transform:scaleX(0.9234);color:#c80000;">=1.26%</div>
<div id="t64" class="t p" style="left:1154.16px;top:657px;font-size:16px;transform:scaleX(0.923);">Frequency(Hz)</div>
<div class="hl" style="left:1318px;width:48px;top:69px;background:#808080"></div><div class="hl" style="left:1318px;width:48px;top:70px;background:#ffffff"></div>
<div class="hl" style="left:1318px;width:48px;top:694px;background:#808080"></div><div class="hl" style="left:1318px;width:48px;top:695px;background:#ffffff"></div>
<div id="t65" class="t " style="left:1331.61px;top:74px;font-size:11px;transform:scaleX(1.0793);">Top</div>
<div class="sbtn" style="left:1332px;top:92px;width:16px;height:15px"><i></i><svg width="5" height="3" style="left:4px;top:4px" shape-rendering="crispEdges"><path d="M2 0h1v1h1v1h1v1h-5v-1h1v-1h1z" fill="#000"/></svg></div>
<div class="sbtn" style="left:1332px;top:108px;width:16px;height:16px"><i></i><svg width="7" height="4" style="left:3px;top:5px" shape-rendering="crispEdges"><path d="M0 0h7v1h-1v1h-1v1h-1v1h-1v-1h-1v-1h-1v-1h-1z" fill="#000"/></svg></div>
<div class="btn" style="left:1326px;top:132px;width:30px;height:18px"><i></i></div>
<div id="t66" class="t " style="left:1334.04px;top:135px;font-size:11px;transform:scaleX(0.9561);">Fit</div>
<div id="t67" class="t " style="left:1325.35px;top:164px;font-size:11px;transform:scaleX(0.9945);">Range</div>
<div class="sbtn" style="left:1332px;top:180px;width:16px;height:15px"><i></i><svg width="5" height="3" style="left:4px;top:4px" shape-rendering="crispEdges"><path d="M2 0h1v1h1v1h1v1h-5v-1h1v-1h1z" fill="#000"/></svg></div>
<div class="sbtn" style="left:1332px;top:196px;width:16px;height:16px"><i></i><svg width="7" height="4" style="left:3px;top:5px" shape-rendering="crispEdges"><path d="M0 0h7v1h-1v1h-1v1h-1v1h-1v-1h-1v-1h-1v-1h-1z" fill="#000"/></svg></div>
<div class="btn" style="left:1326px;top:225px;width:30px;height:20px"><i></i></div>
<div id="t68" class="t " style="left:1332.36px;top:229px;font-size:11px;transform:scaleX(1.0291);">Set</div>
<div id="t69" class="t " style="left:1324.86px;top:258px;font-size:11px;transform:scaleX(0.9768);">FrHigh</div>
<div class="sbtn" style="left:1326px;top:276px;width:14px;height:15px"><i></i><svg width="3" height="5" style="left:3px;top:3px" shape-rendering="crispEdges"><path d="M2 0h1v5h-1v-1h-1v-1h-1v-1h1v-1h1z" fill="#000"/></svg></div>
<div class="sbtn" style="left:1341px;top:276px;width:15px;height:15px"><i></i><svg width="3" height="5" style="left:5px;top:4px" shape-rendering="crispEdges"><path d="M0 0h1v1h1v1h1v1h-1v1h-1v1h-1z" fill="#000"/></svg></div>
<div class="abs" style="left:1329px;top:298px;width:30px;height:14px;overflow:hidden">
<div class="t" style="left:0px;top:2px;font-size:11px;letter-spacing:0.45px">FrLow</div></div>
<div class="sbtn" style="left:1326px;top:315px;width:14px;height:15px"><i></i><svg width="3" height="5" style="left:3px;top:3px" shape-rendering="crispEdges"><path d="M2 0h1v5h-1v-1h-1v-1h-1v-1h1v-1h1z" fill="#000"/></svg></div>
<div class="sbtn" style="left:1341px;top:315px;width:14px;height:15px"><i></i><svg width="3" height="5" style="left:5px;top:3px" shape-rendering="crispEdges"><path d="M0 0h1v1h1v1h1v1h-1v1h-1v1h-1z" fill="#000"/></svg></div>
<div id="t70" class="t " style="left:3.12px;top:700px;font-size:11px;transform:scaleX(0.9756);">Ready</div>
<div class="pane" style="left:1060px;width:73px"></div>
<div id="t71" class="t " style="left:1066.04px;top:700px;font-size:11px;transform:scaleX(1.0149);">L:-5.7dB</div>
<div class="pane" style="left:1135px;width:73px"></div>
<div id="t72" class="t " style="left:1141.06px;top:700px;font-size:11px;">R:-88.0dB</div>
<div class="pane" style="left:1210px;width:156px"></div>
<div id="t73" class="t " style="left:1216.08px;top:700px;font-size:11px;transform:scaleX(1.0183);">Spectrum Analyzer</div>
<svg width="1366" height="714" shape-rendering="crispEdges" style="pointer-events:none"><path d="M1365 701h1v12h-1z" fill="#d4d0c8"/><path d="M1364 702h1v1h-1zM1363 703h1v1h-1zM1362 704h1v1h-1zM1361 705h1v1h-1zM1360 706h1v1h-1zM1364 706h1v1h-1zM1359 707h1v1h-1zM1363 707h1v1h-1zM1358 708h1v1h-1zM1362 708h1v1h-1zM1357 709h1v1h-1zM1361 709h1v1h-1zM1356 710h1v1h-1zM1360 710h1v1h-1zM1364 710h1v1h-1zM1355 711h1v1h-1zM1359 711h1v1h-1zM1363 711h1v1h-1zM1354 712h1v1h-1zM1358 712h1v1h-1zM1362 712h1v1h-1z" fill="#fff"/><path d="M1364 703h1v1h-1zM1363 704h1v1h-1zM1364 704h1v1h-1zM1362 705h1v1h-1zM1363 705h1v1h-1zM1361 706h1v1h-1zM1362 706h1v1h-1zM1360 707h1v1h-1zM1361 707h1v1h-1zM1364 707h1v1h-1zM1359 708h1v1h-1zM1360 708h1v1h-1zM1363 708h1v1h-1zM1364 708h1v1h-1zM1358 709h1v1h-1zM1359 709h1v1h-1zM1362 709h1v1h-1zM1363 709h1v1h-1zM1357 710h1v1h-1zM1358 710h1v1h-1zM1361 710h1v1h-1zM1362 710h1v1h-1zM1356 711h1v1h-1zM1357 711h1v1h-1zM1360 711h1v1h-1zM1361 711h1v1h-1zM1364 711h1v1h-1zM1355 712h1v1h-1zM1356 712h1v1h-1zM1359 712h1v1h-1zM1360 712h1v1h-1zM1363 712h1v1h-1zM1364 712h1v1h-1z" fill="#808080"/><path d="M0 713.500H1366" stroke="#c0c0c0"/></svg>
</body></html>
